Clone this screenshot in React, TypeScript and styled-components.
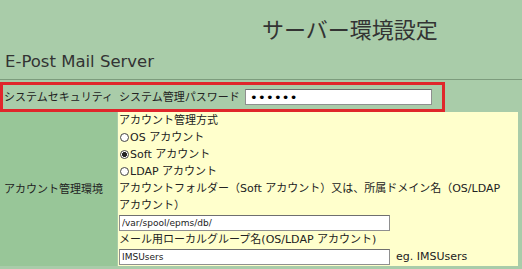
import styled, {createGlobalStyle} from 'styled-components'

const colors = {
  page: '#a9cca9',
  label: '#98c698',
  cell: '#ffffcc',
  rule: '#7d9c7d',
  text: '#222222',
  mark: '#e0262b',
}

const GlobalStyle = createGlobalStyle`
  html, body {
    margin: 0;
    padding: 0;
    background: ${colors.page};
  }
  body {
    font-family: "DejaVu Sans", "Noto Sans CJK JP", sans-serif;
    color: ${colors.text};
  }
`

const Page = styled.div`
  width: 522px;
  height: 269px;
  overflow: hidden;
`

const Title = styled.h1`
  margin: 0;
  padding: 12px 0 0 262px;
  height: 32px;
  font-family: "Noto Sans CJK JP", sans-serif;
  font-size: 22px;
  font-weight: normal;
  line-height: 32px;
  color: #333;
`

const SubTitle = styled.h2`
  margin: 0;
  padding: 5px 0 0 5px;
  height: 30px;
  font-size: 16.5px;
  font-weight: normal;
  line-height: 26px;
  color: #333;
  border-bottom: 1px solid ${colors.rule};
`

const Table = styled.div`
  display: grid;
  grid-template-columns: 117px 1fr;
  column-gap: 1px;
  margin: 2px 4px 0 0;
  font-size: 11px;
  line-height: 17px;
`

const SecurityRow = styled.div`
  position: relative;
  grid-column: 1 / 3;
  display: grid;
  grid-template-columns: 119px 126px 1fr;
  align-items: center;
  height: 30px;
`

const Mark = styled.div`
  position: absolute;
  left: 0;
  top: 0;
  width: 439px;
  height: 24px;
  border: 3px solid ${colors.mark};
  pointer-events: none;
`

const RowLabel = styled.div<{$tinted?: boolean}>`
  display: flex;
  align-items: center;
  padding-left: 4px;
  white-space: nowrap;
  background: ${({$tinted}) => ($tinted ? colors.label : 'transparent')};
`

const Caption = styled.span`
  white-space: nowrap;
`

const TextBox = styled.input<{$width: number}>`
  box-sizing: border-box;
  width: ${({$width}) => $width}px;
  height: 16px;
  margin: 0;
  padding: 0 2px;
  border: 1px solid #8f8f8f;
  border-top-color: #6f6f6f;
  background: #fff;
  font-family: "DejaVu Sans", sans-serif;
  font-size: 9px;
  color: #222;
  outline: none;
  &[type="password"] {
    padding-left: 4px;
    font-size: 13px;
    letter-spacing: 0.3px;
    color: #000;
  }
`

const Cell = styled.div`
  background: ${colors.cell};
  padding: 0 0 1px 1px;
`

const Line = styled.div`
  display: flex;
  align-items: center;
  min-height: 17px;
`

const Wrapped = styled.div`
  word-break: keep-all;
`

const Radio = styled.input`
  appearance: none;
  box-sizing: border-box;
  width: 9px;
  height: 9px;
  margin: 0 1px 0 1px;
  border: 1px solid #444;
  border-radius: 50%;
  background: #fff;
  &:checked {
    background: radial-gradient(circle, #222 0 2.2px, #fff 2.6px);
  }
`

const Hint = styled.span`
  margin-left: 6px;
`

const methods = [
  {key: 'os', label: 'OS アカウント'},
  {key: 'soft', label: 'Soft アカウント'},
  {key: 'ldap', label: 'LDAP アカウント'},
]

const App = () => {
  return (
    <Page>
      <GlobalStyle />
      <Title>サーバー環境設定</Title>
      <SubTitle>E-Post Mail Server</SubTitle>
      <Table>
        <SecurityRow>
          <RowLabel>システムセキュリティ</RowLabel>
          <Caption>システム管理パスワード</Caption>
          <TextBox type="password" $width={187} defaultValue="secret" />
          <Mark />
        </SecurityRow>
        <RowLabel $tinted>アカウント管理環境</RowLabel>
        <Cell>
          <Line>アカウント管理方式</Line>
          {methods.map(m => (
            <Line key={m.key}>
              <Radio type="radio" name="method" defaultChecked={m.key === 'soft'} />
              {m.label}
            </Line>
          ))}
          <Wrapped>アカウントフォルダー（Soft アカウント）又は、所属ドメイン名（OS/LDAP アカウント）</Wrapped>
          <Line>
            <TextBox type="text" $width={271} defaultValue="/var/spool/epms/db/" />
          </Line>
          <Line>メール用ローカルグループ名(OS/LDAP アカウント)</Line>
          <Line>
            <TextBox type="text" $width={271} defaultValue="IMSUsers" />
            <Hint>eg. IMSUsers</Hint>
          </Line>
        </Cell>
      </Table>
    </Page>
  )
}

export default App
